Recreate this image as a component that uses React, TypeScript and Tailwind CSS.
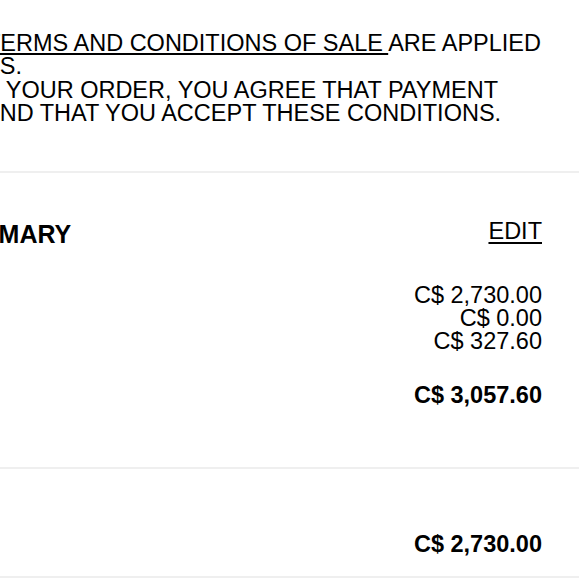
import React from "react";

const amounts = ["C$ 2,730.00", "C$ 0.00", "C$ 327.60"];

export default function App() {
  return (
    <div className="w-[579px] min-h-[580px] bg-white overflow-hidden text-black font-['Liberation_Sans',Arial,sans-serif]">
      {/* Terms notice */}
      <section className="pt-[32px] pb-[46px] text-[23.5px] leading-[23px] whitespace-nowrap">
        <div>
          <div className="-ml-[14px]">
            <span className="underline underline-offset-[2px]">TERMS AND CONDITIONS OF SALE </span>
            ARE APPLIED
          </div>
          <div className="-ml-[85px]">ORDERS.</div>
        </div>
        <div className="mt-[1px]">
          <div className="-ml-[141px]">BY PLACING YOUR ORDER, YOU AGREE THAT PAYMENT</div>
          <div className="-ml-[16px]">AND THAT YOU ACCEPT THESE CONDITIONS.</div>
        </div>
      </section>

      {/* Order summary */}
      <section className="border-t-2 border-[#efefef] pt-[47px] pb-[60px] pr-[37px]">
        <div className="flex items-start justify-between">
          <h2 className="-ml-[57px] mt-[2px] text-[25px] leading-[25px] font-bold whitespace-nowrap">
            SUMMARY
          </h2>
          <a className="text-[23.5px] leading-[23px] underline underline-offset-[3px] decoration-2">
            EDIT
          </a>
        </div>
        <div className="mt-[37px] flex flex-col items-end text-[23.5px] leading-[23px]">
          {amounts.map((a) => (
            <div key={a}>{a}</div>
          ))}
          <div className="mt-[31px] font-bold">C$ 3,057.60</div>
        </div>
      </section>

      {/* Total */}
      <section className="border-t-2 border-[#efefef] pt-[64px] pb-[20px] pr-[37px] border-b-2">
        <div className="flex justify-end text-[23.5px] leading-[23px] font-bold">C$ 2,730.00</div>
      </section>
    </div>
  );
}
